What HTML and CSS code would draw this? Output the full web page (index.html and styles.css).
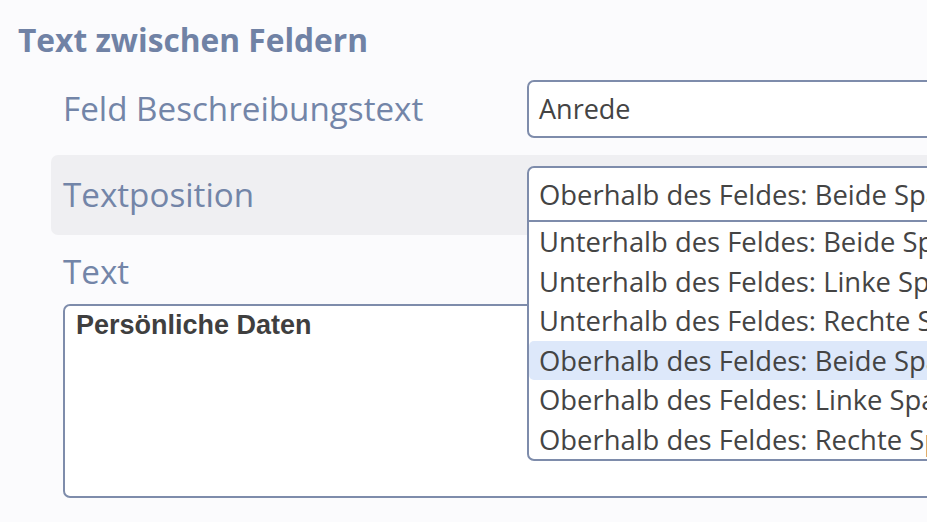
FILE: index.html
```html
<!DOCTYPE html>
<html lang="de">
<head>
<meta charset="utf-8">
<title>Text zwischen Feldern</title>
<link rel="stylesheet" href="styles.css">
</head>
<body>
<div class="page">
  <h2 class="section-title">Text zwischen Feldern</h2>
  <div class="form">
    <div class="row">
      <label class="label">Feld Beschreibungstext</label>
      <div class="control"><div class="input">Anrede</div></div>
    </div>
    <div class="row row-active">
      <label class="label">Textposition</label>
      <div class="control">
        <div class="select">
          <div class="select-value">Oberhalb des Feldes: Beide Spalten</div>
          <ul class="options">
            <li class="option">Unterhalb des Feldes: Beide Spalten</li>
            <li class="option">Unterhalb des Feldes: Linke Spalte</li>
            <li class="option">Unterhalb des Feldes: Rechte Spalte</li>
            <li class="option option-selected">Oberhalb des Feldes: Beide Spalten</li>
            <li class="option">Oberhalb des Feldes: Linke Spalte</li>
            <li class="option">Oberhalb des Feldes: Rechte Spalte</li>
          </ul>
        </div>
      </div>
    </div>
    <div class="block">
      <label class="label label-block">Text</label>
      <div class="textarea"><strong>Persönliche Daten</strong></div>
    </div>
  </div>
</div>
</body>
</html>
```
FILE: styles.css
```css
* { box-sizing: border-box; }
html, body {
  margin: 0;
  padding: 0;
  width: 927px;
  height: 522px;
  overflow: hidden;
  background: #fbfbfd;
  font-family: "Open Sans", "Noto Sans", sans-serif;
}
.page {
  padding: 20px 0 0 18px;
}
.section-title {
  margin: 0;
  font-size: 31.7px;
  line-height: 40px;
  font-weight: 700;
  color: #7082a5;
}
.form {
  margin-top: 9px;
  margin-left: 33px;
  width: 1100px;
}
.row {
  display: grid;
  grid-template-columns: 464px 1fr;
  align-items: center;
  padding: 11px 12px;
  margin-bottom: 6px;
  border-radius: 7px;
}
.row-active {
  background: #efeff2;
}
.label {
  font-size: 33.2px;
  line-height: 40px;
  color: #7385a8;
}
.control {
  position: relative;
}
.input, .select-value {
  height: 58px;
  border: 2px solid #7e8cab;
  border-radius: 7px;
  background: #fff;
  padding: 0 10px;
  font-size: 27px;
  line-height: 54px;
  color: #444;
  white-space: nowrap;
}
.select {
  position: relative;
}
.select-value {
  height: 58px;
  font-size: 27.4px;
  border-bottom-left-radius: 0;
  border-bottom-right-radius: 0;
}
.options {
  position: absolute;
  left: 0;
  right: 0;
  top: 54px;
  margin: 0;
  padding: 0;
  list-style: none;
  background: #fff;
  border: 2px solid #7e8cab;
  border-radius: 0 0 7px 7px;
  z-index: 2;
}
.option {
  height: 39.5px;
  line-height: 39.5px;
  padding: 0 10px;
  font-size: 27.4px;
  color: #444;
  white-space: nowrap;
}
.option-selected {
  background: #dde8fa;
  border-radius: 5px;
}
.block {
  padding: 0 12px;
}
.label-block {
  display: block;
  line-height: 40px;
  margin-top: 17px;
}
.textarea {
  margin-top: 12px;
  height: 194px;
  border: 2px solid #7e8cab;
  border-radius: 7px;
  background: #fff;
  padding: 2px 11px;
  font-family: "Liberation Sans", Arial, sans-serif;
  font-size: 27px;
  line-height: 34px;
  color: #3f3f3f;
}
```
